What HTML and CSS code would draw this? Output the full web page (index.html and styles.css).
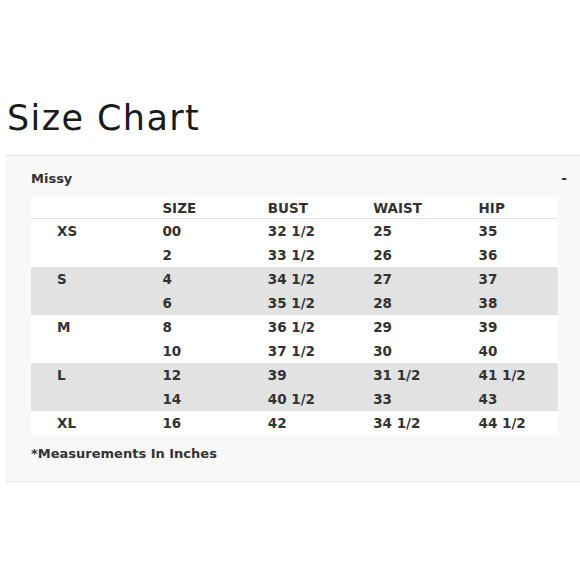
FILE: index.html
```html
<!DOCTYPE html>
<html>
<head>
<meta charset="utf-8">
<link rel="stylesheet" href="styles.css">
</head>
<body>
<h1 class="title">Size Chart</h1>
<section class="panel">
  <div class="panel-head">
    <span class="panel-name">Missy</span>
    <span class="toggle">-</span>
  </div>
  <table class="chart">
    <thead>
      <tr><th></th><th>SIZE</th><th>BUST</th><th>WAIST</th><th>HIP</th></tr>
    </thead>
    <tbody>
      <tr><td>XS</td><td>00</td><td>32 1/2</td><td>25</td><td>35</td></tr>
      <tr><td></td><td>2</td><td>33 1/2</td><td>26</td><td>36</td></tr>
      <tr class="alt"><td>S</td><td>4</td><td>34 1/2</td><td>27</td><td>37</td></tr>
      <tr class="alt"><td></td><td>6</td><td>35 1/2</td><td>28</td><td>38</td></tr>
      <tr><td>M</td><td>8</td><td>36 1/2</td><td>29</td><td>39</td></tr>
      <tr><td></td><td>10</td><td>37 1/2</td><td>30</td><td>40</td></tr>
      <tr class="alt"><td>L</td><td>12</td><td>39</td><td>31 1/2</td><td>41 1/2</td></tr>
      <tr class="alt"><td></td><td>14</td><td>40 1/2</td><td>33</td><td>43</td></tr>
      <tr><td>XL</td><td>16</td><td>42</td><td>34 1/2</td><td>44 1/2</td></tr>
    </tbody>
  </table>
  <p class="note">*Measurements In Inches</p>
</section>
</body>
</html>
```
FILE: styles.css
```css
html, body {
  margin: 0;
  padding: 0;
  background: #ffffff;
}
body {
  font-family: "DejaVu Sans", "Liberation Sans", sans-serif;
  color: #2b2b2b;
}
.title {
  margin: 0;
  padding: 98px 0 0 7px;
  font-size: 35px;
  font-weight: normal;
  line-height: 40px;
  color: #1a1a1a;
  letter-spacing: 1.4px;
}
.panel {
  margin: 17px 0 0 5px;
  background: #f8f8f8;
  border-top: 1px solid #e6e6e6;
  border-bottom: 1px solid #e6e6e6;
  padding: 0 0 0 26px;
  height: 327px;
  box-sizing: border-box;
}
.panel-head {
  display: flex;
  justify-content: space-between;
  align-items: center;
  height: 41px;
  padding: 3px 13px 0 0;
  box-sizing: border-box;
  font-size: 13px;
  font-weight: bold;
  color: #333;
}
.toggle {
  font-weight: bold;
  font-size: 14px;
}
.chart {
  border-collapse: collapse;
  table-layout: fixed;
  width: 527px;
  background: #ffffff;
  font-size: 13.5px;
  font-weight: bold;
  color: #333;
}
.chart th, .chart td {
  text-align: left;
  padding: 0 0 0 26px;
  white-space: nowrap;
  line-height: 16px;
}
.chart th {
  height: 21px;
  border-bottom: 1px solid #e3e3e3;
  font-weight: bold;
}
.chart td {
  height: 24px;
  padding-top: 1px;
  box-sizing: border-box;
}
.chart tr.alt td {
  background: #e2e2e2;
}
.note {
  margin: 0;
  height: 35px;
  line-height: 35px;
  padding-top: 1px;
  font-size: 13px;
  font-weight: bold;
  color: #333;
}
```
